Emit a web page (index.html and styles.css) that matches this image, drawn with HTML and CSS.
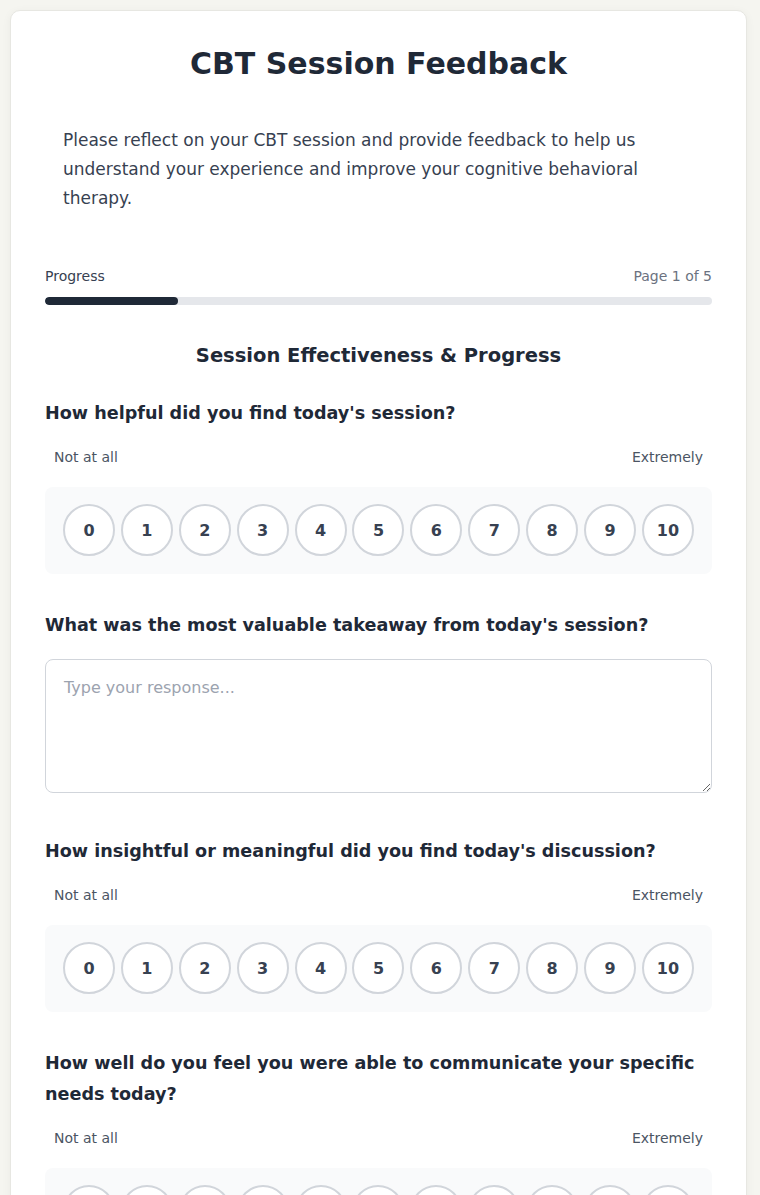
FILE: index.html
```
<!DOCTYPE html>
<html lang="en">
<head>
    <meta charset="UTF-8">
    <meta name="viewport" content="width=device-width, initial-scale=1.0">
    <title>CBT Session Feedback</title>
    <link rel="stylesheet" href="styles.css">
</head>
<body>

<div class="card">
    <h1>CBT Session Feedback</h1>
    <p class="intro">Please reflect on your CBT session and provide feedback to help us understand your experience and improve your cognitive behavioral therapy.</p>

    <div class="progress">
        <div class="progress-head">
            <span class="progress-label">Progress</span>
            <span class="progress-page">Page 1 of 5</span>
        </div>
        <div class="progress-track">
            <div class="progress-fill" style="width: 20%"></div>
        </div>
    </div>

    <h2 class="section-title">Session Effectiveness &amp; Progress</h2>

    <div class="question">
        <div class="question-text">How helpful did you find today's session?</div>
        <div class="scale-labels"><span>Not at all</span><span>Extremely</span></div>
        <div class="scale" data-name="helpful"></div>
    </div>

    <div class="question question-open">
        <div class="question-text">What was the most valuable takeaway from today's session?</div>
        <textarea placeholder="Type your response..."></textarea>
    </div>

    <div class="question">
        <div class="question-text">How insightful or meaningful did you find today's discussion?</div>
        <div class="scale-labels"><span>Not at all</span><span>Extremely</span></div>
        <div class="scale" data-name="insightful"></div>
    </div>

    <div class="question">
        <div class="question-text">How well do you feel you were able to communicate your specific needs today?</div>
        <div class="scale-labels"><span>Not at all</span><span>Extremely</span></div>
        <div class="scale" data-name="communicate"></div>
    </div>
</div>

<script>
    // build the 0-10 rating buttons for every scale
    document.querySelectorAll('.scale').forEach(scale => {
        for (let i = 0; i <= 10; i++) {
            const btn = document.createElement('button');
            btn.type = 'button';
            btn.classList.add('scale-option');
            btn.textContent = i;
            btn.onclick = () => {
                scale.querySelectorAll('.scale-option').forEach(b => b.classList.remove('selected'));
                btn.classList.add('selected');
            };
            scale.appendChild(btn);
        }
    });
</script>

</body>
</html>
```

FILE: styles.css
```
body {
    font-family: "DejaVu Sans", Inter, sans-serif;
    background-color: #f5f5f0;
    color: #1f2937;
    margin: 0;
    padding: 10px 13px 40px 10px;
}

.card {
    background-color: #fff;
    border: 1px solid #e7e7e2;
    border-radius: 10px;
    box-shadow: 0 2px 10px rgba(0, 0, 0, 0.05);
    padding: 35px 34px;
}

h1 {
    margin: 0 0 44px;
    font-size: 30px;
    line-height: 36px;
    font-weight: 700;
    text-align: center;
    color: #1f2937;
}

.intro {
    margin: 0 0 53px;
    padding: 0 18px;
    font-size: 17px;
    line-height: 29px;
    color: #374151;
}

.progress-head {
    display: flex;
    justify-content: space-between;
    font-size: 14px;
    line-height: 21px;
    margin-bottom: 10px;
}

.progress-label {
    font-weight: 500;
    color: #374151;
}

.progress-page {
    color: #6b7280;
}

.progress-track {
    height: 8px;
    background-color: #e5e7eb;
    border-radius: 4px;
    overflow: hidden;
}

.progress-fill {
    height: 100%;
    background-color: #1f2937;
    border-radius: 4px;
}

.section-title {
    margin: 36px 0 27px;
    font-size: 19.5px;
    line-height: 30px;
    font-weight: 600;
    text-align: center;
    color: #1f2937;
}

.question {
    margin-bottom: 36px;
}

.question-open {
    margin-bottom: 43px;
}

.question-text {
    font-size: 17.6px;
    line-height: 31px;
    font-weight: 600;
    color: #1f2937;
    margin-bottom: 18px;
}

.scale-labels {
    display: flex;
    justify-content: space-between;
    padding: 0 9px;
    font-size: 14px;
    line-height: 21px;
    color: #4b5563;
    margin-bottom: 19px;
}

.scale {
    display: flex;
    justify-content: space-between;
    background-color: #f9fafb;
    border-radius: 8px;
    padding: 17px 18px 18px;
}

.scale-option {
    width: 52px;
    height: 52px;
    border-radius: 50%;
    border: 2px solid #d1d5db;
    background-color: #fff;
    font-family: inherit;
    font-size: 16px;
    font-weight: 600;
    color: #374151;
    cursor: pointer;
    padding: 0;
    transition: border-color 0.2s, background-color 0.2s;
}

.scale-option:hover {
    border-color: #9ca3af;
}

.scale-option.selected {
    background-color: #1f2937;
    border-color: #1f2937;
    color: #fff;
}

textarea {
    display: block;
    width: 100%;
    height: 134px;
    box-sizing: border-box;
    border: 1px solid #d1d5db;
    border-radius: 8px;
    padding: 16px 18px;
    font-family: inherit;
    font-size: 16px;
    line-height: 24px;
    color: #1f2937;
    resize: vertical;
    outline: none;
}

textarea::placeholder {
    color: #9ca3af;
}

textarea:focus {
    border-color: #6b7280;
}
```
